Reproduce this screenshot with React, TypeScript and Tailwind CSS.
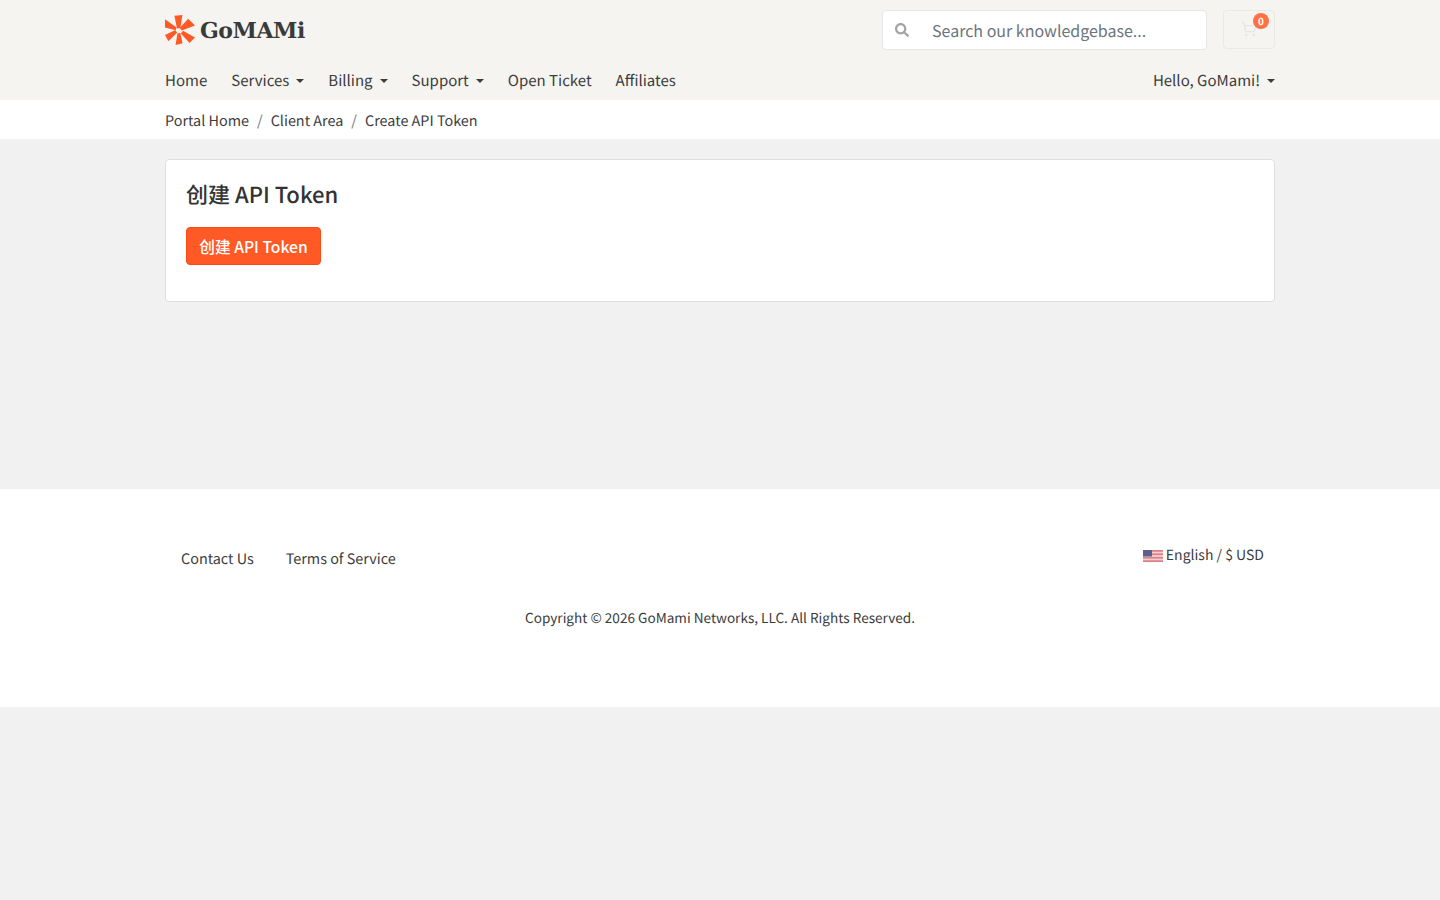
import { FaSearch } from "react-icons/fa";
import { ShoppingCart } from "lucide-react";

const cjk = "font-['Noto_Sans_CJK_SC','Noto_Sans',sans-serif] [text-rendering:geometricPrecision]";

const Caret = () => (
  <span className="mb-[2px] ml-[7px] inline-block h-0 w-0 border-x-[4px] border-t-[4px] border-x-transparent border-t-[#3c3c3c] align-middle" />
);

const Logo = () => (
  <div className="flex items-center">
    <svg width="30" height="30" viewBox="0 0 30 30" fill="#ff5a26">
      <path d="M9.4 0.8 L17.4 0 L15.4 13 L12 13.4 Z" />
      <path d="M30 10.4 L23.2 3.8 L14.6 13 L16.8 15.6 Z" />
      <path d="M30 22.4 L24.6 28 L15.8 18.4 L18 15.8 Z" />
      <path d="M10.6 30 L17.6 28.2 L15.2 17.8 L12.4 18.4 Z" />
      <path d="M0 20 L3.4 26.2 L12.2 17.8 L10.2 15 Z" />
      <path d="M0 4.2 L0 12.4 L10.6 15.2 L11.6 12.4 Z" />
    </svg>
    <span className="ml-[5px] pt-[2px] font-['DejaVu_Serif',serif] text-[22px] leading-none font-bold tracking-[-0.45px] text-[#3a3a3a]">
      GoMAMi
    </span>
  </div>
);

const UsFlag = () => (
  <svg width="20" height="12" viewBox="0 0 20 12" className="mr-[3px] inline-block">
    <rect width="20" height="12" fill="#f6d0d0" />
    <rect y="0" width="20" height="1.7" fill="#dc7f88" />
    <rect y="3.4" width="20" height="1.7" fill="#dc7f88" />
    <rect y="6.9" width="20" height="1.7" fill="#dc7f88" />
    <rect y="10.3" width="20" height="1.7" fill="#dc7f88" />
    <rect width="9" height="6.5" fill="#5a5f90" />
  </svg>
);

export default function App() {
  return (
    <div className={`min-h-[900px] bg-[#f1f1f1] text-[#3c3c3c] ${cjk}`}>
      {/* Header */}
      <header className="bg-[#f5f4f0]">
        <div className="mx-auto flex h-[60px] w-[1110px] items-center justify-between">
          <Logo />
          <div className="flex items-start gap-4 pb-[1px]">
            <div className="flex h-10 w-[325px] items-center rounded border border-[#e6e6e6] bg-white">
              <FaSearch className="ml-3 h-[14px] w-[14px] text-[#a4a4a4]" />
              <span className="ml-[23px] text-[16px] text-[#6c757d]">Search our knowledgebase...</span>
            </div>
            <div className="relative flex h-[39px] w-[52px] items-center justify-center rounded border border-[#e9e9e6]">
              <ShoppingCart className="h-4 w-4 text-[#e6e6e4]" />
              <span className="absolute top-[2px] right-[5px] flex h-4 w-4 items-center justify-center rounded-full bg-[#ff7043] text-[10px] font-bold text-white">
                0
              </span>
            </div>
          </div>
        </div>
        <nav className="mx-auto flex h-10 w-[1110px] items-center justify-between pt-[3px] text-[15px]">
          <div className="flex items-center gap-6">
            <span>Home</span>
            <span>Services<Caret /></span>
            <span>Billing<Caret /></span>
            <span>Support<Caret /></span>
            <span>Open Ticket</span>
            <span>Affiliates</span>
          </div>
          <span>Hello, GoMami!<Caret /></span>
        </nav>
      </header>

      {/* Breadcrumb */}
      <div className="h-[39px] bg-white">
        <div className="mx-auto flex h-[39px] w-[1110px] items-center pt-[2px] text-[14.4px]">
          <span>Portal Home</span>
          <span className="mx-2 text-[#6c757d]">/</span>
          <span>Client Area</span>
          <span className="mx-2 text-[#6c757d]">/</span>
          <span>Create API Token</span>
        </div>
      </div>

      {/* Main */}
      <main className="h-[350px] pt-5">
        <div className="mx-auto h-[143px] w-[1110px] rounded border border-[#dfdfdf] bg-white px-5 pt-[20px]">
          <h3 className="text-[22px] leading-[29px] font-medium text-[#333]">创建 API Token</h3>
          <button className="mt-[18px] h-[38px] w-[135px] rounded border border-[#ff4a14] bg-[#ff5a26] pt-[2px] text-[15.7px] font-medium whitespace-nowrap text-white">
            创建 API Token
          </button>
        </div>
      </main>

      {/* Footer */}
      <footer className="h-[218px] bg-white pt-[50px]">
        <div className="mx-auto flex w-[1110px] items-start justify-between text-[14.4px]">
          <div className="flex gap-8 pt-[9px] pl-4">
            <span>Contact Us</span>
            <span>Terms of Service</span>
          </div>
          <div className="pt-[6px] pr-[11px] text-[14px]">
            <UsFlag />
            English / $ USD
          </div>
        </div>
        <p className="mt-[37px] text-center text-[13.6px]">Copyright © 2026 GoMami Networks, LLC. All Rights Reserved.</p>
      </footer>
    </div>
  );
}
